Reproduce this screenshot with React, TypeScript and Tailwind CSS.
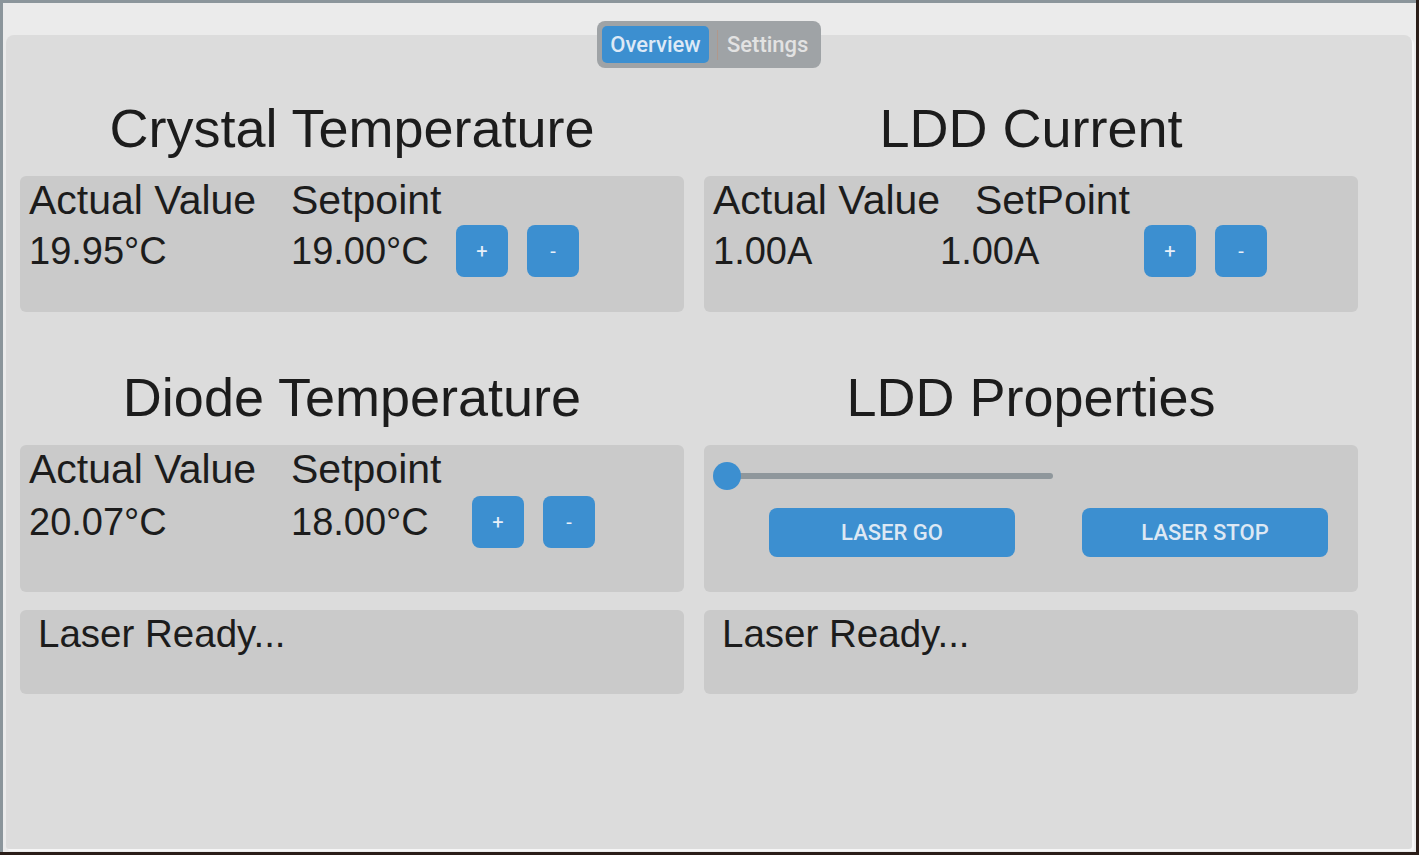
import React from 'react';

const sans = { fontFamily: '"Liberation Sans", Arial, sans-serif' };
const roboto = { fontFamily: 'Roboto, "Liberation Sans", sans-serif' };

const StepButtons = () => (
  <div className="flex gap-[19px]" style={roboto}>
    <button className="w-[52px] h-[52px] rounded-[8px] bg-[#3c8fd0] text-[#e8f0f9] text-[20px] flex items-center justify-center">
      +
    </button>
    <button className="w-[52px] h-[52px] rounded-[8px] bg-[#3c8fd0] text-[#e8f0f9] text-[20px] flex items-center justify-center">
      -
    </button>
  </div>
);

type ReadoutProps = {
  title: string;
  setLabel: string;
  actual: string;
  setpoint: string;
  actualW: string;
  setW: string;
  rowTop: string;
  cardH: string;
};

const Title = ({ children }: { children: React.ReactNode }) => (
  <div className="h-[60px] mb-[18px] flex items-center justify-center text-[54px] leading-none text-[#1c1c1c]" style={sans}>
    {children}
  </div>
);

const Readout = ({ title, setLabel, actual, setpoint, actualW, setW, rowTop, cardH }: ReadoutProps) => (
  <div>
    <Title>{title}</Title>
    <div className={`${cardH} rounded-[6px] bg-[#cacaca] pl-[9px] pt-[2px] text-[#1c1c1c]`} style={sans}>
      <div className="flex h-[44px] items-center text-[41px] leading-none">
        <span className="w-[262px]">Actual Value</span>
        <span>{setLabel}</span>
      </div>
      <div className={`flex h-[52px] items-center text-[38px] leading-none ${rowTop}`}>
        <span className={actualW}>{actual}</span>
        <span className={setW}>{setpoint}</span>
        <StepButtons />
      </div>
    </div>
  </div>
);

const StatusCard = () => (
  <div className="h-[84px] rounded-[6px] bg-[#cacaca] pl-[18px] pt-[2px] text-[38.5px] leading-[44px] text-[#1c1c1c]" style={sans}>
    Laser Ready...
  </div>
);

const LaserButton = ({ label }: { label: string }) => (
  <button
    className="w-[246px] h-[49px] rounded-[8px] bg-[#3c8fd0] text-[#dde8f4] text-[22px] font-medium"
    style={roboto}
  >
    {label}
  </button>
);

export default function App() {
  return (
    <div className="w-[1419px] h-[855px] bg-[#2a1d18] overflow-hidden">
      <div className="relative w-[1416px] h-[852px] border-t-[3px] border-l-[3px] border-[#8b959b] bg-[#ebebeb] pl-[3px] pt-[32px] pr-[1px] pb-[1px]">
        <div className="w-[1406px] h-[814px] rounded-t-[8px] rounded-b-[3px] bg-[#dcdcdc] pl-[14px] pt-[63px] flex gap-[20px] shadow-[2px_2px_0_#f6f6f6]">
          {/* left column */}
          <div className="w-[664px] flex flex-col">
            <Readout
              title="Crystal Temperature"
              setLabel="Setpoint"
              actual="19.95°C"
              setpoint="19.00°C"
              actualW="w-[262px]"
              setW="w-[165px]"
              rowTop="mt-[3px]"
              cardH="h-[136px]"
            />
            <div className="mt-[55px]">
              <Readout
                title="Diode Temperature"
                setLabel="Setpoint"
                actual="20.07°C"
                setpoint="18.00°C"
                actualW="w-[262px]"
                setW="w-[181px]"
                rowTop="mt-[5px]"
                cardH="h-[147px]"
              />
            </div>
            <div className="mt-[18px]">
              <StatusCard />
            </div>
          </div>

          {/* right column */}
          <div className="w-[654px] flex flex-col">
            <div>
              <Title>LDD Current</Title>
              <div className="h-[136px] rounded-[6px] bg-[#cacaca] pl-[9px] pt-[2px] text-[#1c1c1c]" style={sans}>
                <div className="flex h-[44px] items-center text-[41px] leading-none">
                  <span className="w-[262px]">Actual Value</span>
                  <span>SetPoint</span>
                </div>
                <div className="flex h-[52px] items-center text-[38px] leading-none mt-[3px]">
                  <span className="w-[227px]">1.00A</span>
                  <span className="w-[204px]">1.00A</span>
                  <StepButtons />
                </div>
              </div>
            </div>
            <div className="mt-[55px]">
              <Title>LDD Properties</Title>
              <div className="h-[147px] rounded-[6px] bg-[#cacaca] pl-[9px] pt-[17px]">
                <div className="relative w-[340px] h-[28px]">
                  <div className="absolute left-[14px] right-0 top-[11px] h-[6px] rounded-full bg-[#8f979c]" />
                  <div className="absolute left-0 top-0 w-[28px] h-[28px] rounded-full bg-[#3c8fd0]" />
                </div>
                <div className="flex gap-[67px] pl-[56px] mt-[18px]">
                  <LaserButton label="LASER GO" />
                  <LaserButton label="LASER STOP" />
                </div>
              </div>
            </div>
            <div className="mt-[18px]">
              <StatusCard />
            </div>
          </div>
        </div>

        {/* tab bar overlapping the panel edge */}
        <div className="absolute left-[594px] top-[18px] w-[224px] h-[47px] rounded-[8px] bg-[#9fa3a6] p-[5px] flex items-center" style={roboto}>
          <div className="w-[107px] h-[37px] rounded-[5px] bg-[#3c8fd0] flex items-center justify-center text-[22px] font-medium text-[#dde9f6]">
            Overview
          </div>
          <div className="w-[1px] h-[30px] bg-[#b0988c] ml-[8px]" />
          <div className="ml-[9px] text-[22px] font-medium text-[#e2e2e2]">Settings</div>
        </div>
      </div>
    </div>
  );
}
